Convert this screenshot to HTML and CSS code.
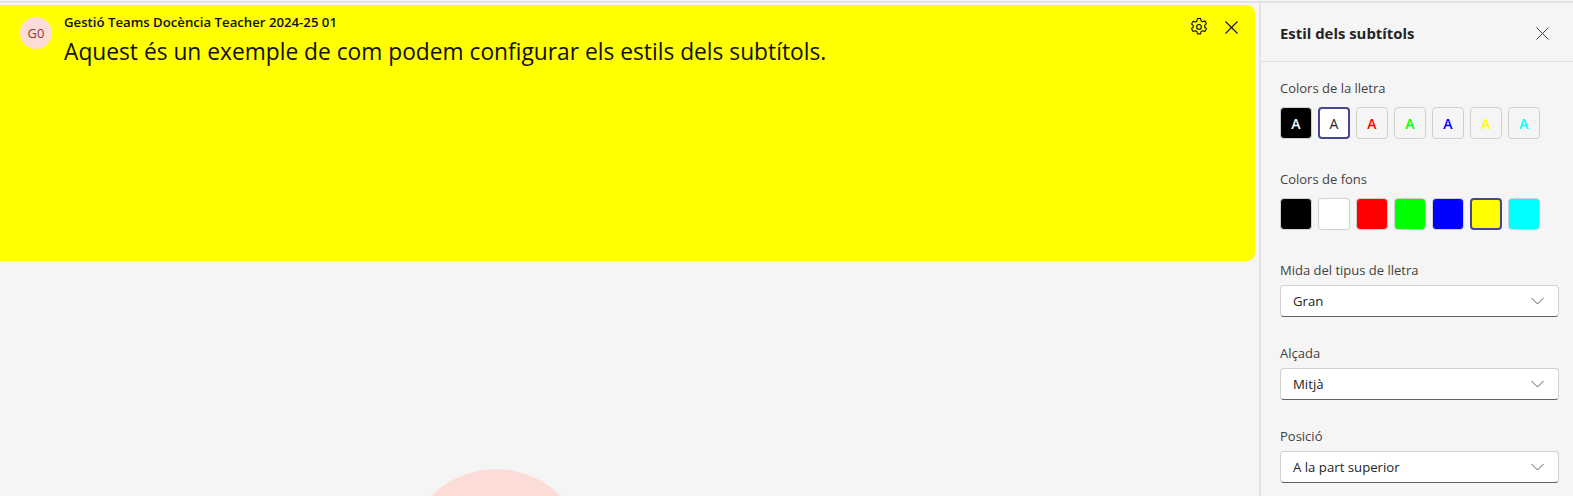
FILE: index.html
```html
<!DOCTYPE html>
<html lang="ca">
<head>
<meta charset="utf-8">
<title>Estil dels subtítols</title>
<link rel="stylesheet" href="styles.css">
</head>
<body>
<div class="app">
  <main class="main">
    <section class="caption">
      <div class="avatar">G0</div>
      <div class="caption-text">
        <div class="speaker">Gestió Teams Docència Teacher 2024-25 01</div>
        <div class="line">Aquest és un exemple de com podem configurar els estils dels subtítols.</div>
      </div>
      <div class="caption-actions">
        <svg class="icon" width="20" height="20" viewBox="0 0 18 18" fill="none" stroke="#111" stroke-width="1" stroke-linejoin="round"><path d="M7.6 1.3h2.8l.5 2.2 1.3.7 2.1-.7 1.4 2.5-1.6 1.5v1.5l1.6 1.5-1.4 2.5-2.1-.7-1.3.7-.5 2.2H7.6l-.5-2.2-1.3-.7-2.1.7-1.4-2.5 1.6-1.5V7.8L2.3 6.3l1.4-2.5 2.1.7 1.3-.7z"/><circle cx="9" cy="8.9" r="2.1"/></svg>
        <svg class="icon" width="13" height="13" viewBox="0 0 13 13" fill="none" stroke="#111" stroke-width="1.1"><path d="M.5.5l12 12M12.5.5l-12 12"/></svg>
      </div>
    </section>
    <div class="stage"><div class="big-avatar"></div></div>
  </main>
  <aside class="panel">
    <header class="panel-head">
      <h2>Estil dels subtítols</h2>
      <svg width="13" height="13" viewBox="0 0 13 13" fill="none" stroke="#424242" stroke-width="1"><path d="M.5.5l12 12M12.5.5l-12 12"/></svg>
    </header>
    <div class="panel-body">
      <div class="group">
        <div class="label label-swatch">Colors de la lletra</div>
        <div class="swatches">
          <div class="swatch s-black t-white">A</div>
          <div class="swatch selected t-dark">A</div>
          <div class="swatch t-red">A</div>
          <div class="swatch t-green">A</div>
          <div class="swatch t-blue">A</div>
          <div class="swatch t-yellow">A</div>
          <div class="swatch t-cyan">A</div>
        </div>
      </div>
      <div class="group group-wide">
        <div class="label label-swatch">Colors de fons</div>
        <div class="swatches">
          <div class="swatch s-black"></div>
          <div class="swatch s-white"></div>
          <div class="swatch s-red"></div>
          <div class="swatch s-green"></div>
          <div class="swatch s-blue"></div>
          <div class="swatch s-yellow selected"></div>
          <div class="swatch s-cyan"></div>
        </div>
      </div>
      <div class="group group-wide">
        <div class="label">Mida del tipus de lletra</div>
        <div class="select"><span>Gran</span><svg width="13" height="8" viewBox="0 0 13 8" fill="none" stroke="#616161" stroke-width="1"><path d="M.5 1l6 6 6-6"/></svg></div>
      </div>
      <div class="group">
        <div class="label">Alçada</div>
        <div class="select"><span>Mitjà</span><svg width="13" height="8" viewBox="0 0 13 8" fill="none" stroke="#616161" stroke-width="1"><path d="M.5 1l6 6 6-6"/></svg></div>
      </div>
      <div class="group">
        <div class="label">Posició</div>
        <div class="select"><span>A la part superior</span><svg width="13" height="8" viewBox="0 0 13 8" fill="none" stroke="#616161" stroke-width="1"><path d="M.5 1l6 6 6-6"/></svg></div>
      </div>
    </div>
  </aside>
</div>
</body>
</html>
```
FILE: styles.css
```css
* { box-sizing: border-box; }
html, body { margin: 0; height: 100%; overflow: hidden; }
body {
  background: #f5f5f5;
  font-family: "Open Sans", "Noto Sans", sans-serif;
  color: #242424;
}
.app {
  display: flex;
  height: 495px;
  margin-top: 1px;
  border-top: 2px solid #e3e3e3;
  background: #f5f5f5;
  overflow: hidden;
}
.main {
  flex: 1;
  min-width: 0;
  padding-top: 2px;
  display: flex;
  flex-direction: column;
  overflow: hidden;
}
.caption {
  flex: none;
  width: 1255px;
  height: 256px;
  background: #ffff00;
  border-radius: 0 8px 8px 0;
  display: flex;
  padding: 12px 17px 0 20px;
  color: #111;
}
.avatar {
  width: 32px;
  height: 32px;
  border-radius: 50%;
  background: #fcdcd6;
  color: #8a3b3b;
  font-size: 13px;
  font-weight: 500;
  display: flex;
  align-items: center;
  justify-content: center;
  flex: none;
}
.caption-text { margin-left: 12px; flex: 1; margin-top: -3px; }
.speaker {
  font-size: 13.2px;
  font-weight: 600;
  line-height: 16px;
}
.line {
  font-size: 22.75px;
  line-height: 30px;
  margin-top: 7px;
}
.caption-actions {
  display: flex;
  align-items: center;
  gap: 16px;
  height: 20px;
  margin-top: 0;
}
.stage {
  flex: 1;
  min-height: 0;
  overflow: hidden;
  padding: 208px 0 0 405px;
}
.big-avatar {
  width: 182px;
  height: 182px;
  border-radius: 50%;
  background: #fcdcd6;
}
.panel {
  width: 314px;
  flex: none;
  border-left: 2px solid #e3e3e3;
  background: #f5f5f5;
}
.panel-head {
  height: 59px;
  border-bottom: 1px solid #e0e0e0;
  display: flex;
  align-items: center;
  justify-content: space-between;
  padding: 2px 24px 0 19px;
}
.panel-head h2 {
  margin: 0;
  font-size: 14.9px;
  font-weight: 700;
  color: #242424;
}
.panel-body {
  padding: 18px 14px 0 19px;
}
.group { margin-top: 28px; }
.group:first-child { margin-top: 0; }
.group-wide { margin-top: 32px; }
.label {
  font-size: 13px;
  line-height: 16px;
  color: #424242;
  margin-bottom: 7px;
}
.label-swatch { margin-bottom: 11px; }
.swatches { display: flex; gap: 6px; }
.swatch {
  width: 32px;
  height: 32px;
  border: 1px solid #d1d1d1;
  border-radius: 4px;
  background: #f5f5f5;
  display: flex;
  align-items: center;
  justify-content: center;
  font-size: 14px;
  font-weight: 600;
}
.swatch.selected { border: 2px solid #444791; }
.t-dark { background: #fff; color: #242424; font-weight: 400; }
.t-white { color: #fff; }
.t-red { color: #ff0000; }
.t-green { color: #00ff00; }
.t-blue { color: #0000ff; }
.t-yellow { color: #ffff00; }
.t-cyan { color: #00ffff; }
.s-black { background: #000; }
.s-white { background: #fff; }
.s-red { background: #ff0000; }
.s-green { background: #00ff00; }
.s-blue { background: #0000ff; }
.s-yellow { background: #ffff00; }
.s-cyan { background: #00ffff; }
.select {
  height: 32px;
  background: #fff;
  border: 1px solid #d1d1d1;
  border-bottom-color: #616161;
  border-radius: 4px;
  display: flex;
  align-items: center;
  justify-content: space-between;
  padding: 0 14px 0 12px;
  font-size: 13.2px;
  color: #242424;
}
```
